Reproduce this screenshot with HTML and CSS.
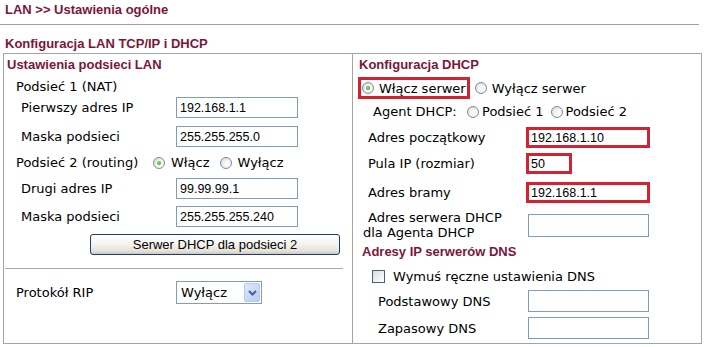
FILE: index.html
```html
<!DOCTYPE html>
<html>
<head>
	<meta charset="utf-8">
	<title>LAN - Ustawienia ogólne</title>
	<link rel="stylesheet" href="styles.css">
</head>
<body>

<div class="title">LAN &gt;&gt; Ustawienia ogólne</div>

<div class="section-title">Konfiguracja LAN TCP/IP i DHCP</div>

<div class="box">
	<div class="col left">
		<div class="h-sub">Ustawienia podsieci LAN</div>
		<div class="sub">Podsieć 1 (NAT)</div>
		<div class="field">
			<span class="lbl">Pierwszy adres IP</span>
			<input class="txt" type="text" value="192.168.1.1">
		</div>
		<div class="field gap8">
			<span class="lbl">Maska podsieci</span>
			<input class="txt" type="text" value="255.255.255.0">
		</div>
		<div class="sub radios">
			<span class="lbl">Podsieć 2 (routing)</span>
			<label class="opt"><span class="radio on"></span>Włącz</label>
			<label class="opt"><span class="radio"></span>Wyłącz</label>
		</div>
		<div class="field">
			<span class="lbl">Drugi adres IP</span>
			<input class="txt" type="text" value="99.99.99.1">
		</div>
		<div class="field gap7">
			<span class="lbl">Maska podsieci</span>
			<input class="txt" type="text" value="255.255.255.240">
		</div>
		<div class="btn-row">
			<button class="btn" type="button">Serwer DHCP dla podsieci 2</button>
		</div>
		<div class="sep"></div>
		<div class="rip">
			<span class="lbl">Protokół RIP</span>
			<div class="select">
				<span class="sel-val">Wyłącz</span>
				<span class="sel-arrow">
					<svg width="9" height="6" viewBox="0 0 9 6"><path d="M1 1 L4.5 4.5 L8 1" fill="none" stroke="#4d6185" stroke-width="2"/></svg>
				</span>
			</div>
		</div>
	</div>

	<div class="col right">
		<div class="h-sub">Konfiguracja DHCP</div>
		<div class="srv">
			<label class="opt mark"><span class="radio on"></span>Włącz serwer</label>
			<label class="opt"><span class="radio"></span>Wyłącz serwer</label>
		</div>
		<div class="agent">
			<span class="lbl">Agent DHCP:</span>
			<label class="opt"><span class="radio"></span>Podsieć 1</label>
			<label class="opt"><span class="radio"></span>Podsieć 2</label>
		</div>
		<div class="rfield first">
			<span class="lbl">Adres początkowy</span>
			<input class="txt red" type="text" value="192.168.1.10">
		</div>
		<div class="rfield g5">
			<span class="lbl">Pula IP (rozmiar)</span>
			<input class="txt red short" type="text" value="50">
		</div>
		<div class="rfield g8">
			<span class="lbl">Adres bramy</span>
			<input class="txt red" type="text" value="192.168.1.1">
		</div>
		<div class="rfield agent-srv">
			<span class="lbl"><span class="l1">Adres serwera DHCP</span><span class="l2">dla Agenta DHCP</span></span>
			<input class="txt tall" type="text" value="">
		</div>
		<div class="h-dns">Adresy IP serwerów DNS</div>
		<div class="chk-row">
			<span class="chk"></span>Wymuś ręczne ustawienia DNS
		</div>
		<div class="dns g1">
			<span class="lbl">Podstawowy DNS</span>
			<input class="txt" type="text" value="">
		</div>
		<div class="dns g5">
			<span class="lbl">Zapasowy DNS</span>
			<input class="txt" type="text" value="">
		</div>
	</div>
</div>

</body>
</html>
```

FILE: styles.css
```css
body{
	margin: 0;
	padding: 0;
	font-family: "DejaVu Sans", Verdana, sans-serif;
	font-size: 13px;
	color: #000;
	background-color: #fff;
}

.title{
	font: bold 13px "Liberation Sans", Arial, sans-serif;
	color: #7d1538;
	height: 24px;
	line-height: 20px;
	padding-left: 5px;
	margin-right: 5px;
	border-bottom: 1px solid #a0a0a0;
}

.section-title{
	font: bold 13px "Liberation Sans", Arial, sans-serif;
	color: #7d1538;
	padding: 10px 0 0 5px;
	height: 18px;
	line-height: 18px;
}

.box{
	margin-left: 3px;
	width: 697px;
	height: 289px;
	border: 1px solid #a4a4a4;
	display: grid;
	grid-template-columns: 348px 349px;
}

.col{
	display: flex;
	flex-direction: column;
}

.right{
	border-left: 1px solid #a4a4a4;
}

.h-sub{
	font: bold 13px "Liberation Sans", Arial, sans-serif;
	color: #7d1538;
	height: 22px;
	line-height: 22px;
	padding-left: 3px;
}

.right .h-sub{
	height: 21px;
	line-height: 21px;
	padding-left: 6px;
}

.sub{
	height: 21px;
	padding-left: 12px;
	display: flex;
	align-items: center;
}

.sub.radios{
	height: 31px;
}

.sub.radios .lbl{
	width: 137px;
}

.field{
	display: flex;
	align-items: center;
	height: 21px;
	padding-left: 17px;
}

.field .lbl{
	width: 155px;
}

.gap8{ margin-top: 8px; }
.gap7{ margin-top: 7px; }

.txt{
	box-sizing: border-box;
	width: 122px;
	height: 21px;
	margin: 0;
	padding: 0 3px;
	border: 1px solid #7f9db9;
	font: 12.5px "Liberation Sans", Arial, sans-serif;
	color: #000;
	background: #fff;
}

.txt.red{
	width: 124px;
	border: 3px solid #d52230;
	padding: 0 2px;
}

.txt.short{
	width: 46px;
}

.txt.tall{
	height: 23px;
	width: 121px;
}

/* XP style radio and checkbox */
.opt{
	display: flex;
	align-items: center;
	gap: 6px;
	margin-right: 10px;
}

.radio{
	box-sizing: border-box;
	width: 12px;
	height: 12px;
	border: 1px solid #7c8aa4;
	border-radius: 50%;
	background: radial-gradient(circle at 65% 65%, #ffffff 0%, #f2f2ee 45%, #d4d4ce 100%);
	display: flex;
	align-items: center;
	justify-content: center;
}

.radio.on::after{
	content: "";
	width: 4px;
	height: 4px;
	border-radius: 50%;
	background: radial-gradient(circle at 40% 40%, #7be36a, #219a21);
}

.chk{
	box-sizing: border-box;
	width: 13px;
	height: 13px;
	border: 1px solid #4e5f7e;
	background: linear-gradient(135deg, #dcdcd6, #ffffff);
	margin-right: 8px;
}

.btn-row{
	margin-top: 7px;
	padding-left: 86px;
}

.btn{
	box-sizing: border-box;
	width: 250px;
	height: 21px;
	margin: 0;
	padding: 0;
	border: 1px solid #1c3e6e;
	border-radius: 3px;
	background: linear-gradient(#ffffff 0%, #f4f3ee 50%, #e4e1d8 85%, #cdc8bb 100%);
	font: 13px "Liberation Sans", Arial, sans-serif;
	color: #000;
}

.sep{
	margin-top: 13px;
	margin-left: 1px;
	margin-right: 9px;
	height: 0;
	border-top: 1px solid #a8a8a8;
}

.rip{
	margin-top: 12px;
	display: flex;
	align-items: center;
	padding-left: 12px;
	height: 23px;
}

.rip .lbl{
	width: 160px;
}

.select{
	box-sizing: border-box;
	width: 86px;
	height: 23px;
	border: 1px solid #7f9db9;
	display: flex;
	align-items: center;
	justify-content: space-between;
	padding: 0 1px 0 4px;
}

.sel-arrow{
	box-sizing: border-box;
	width: 16px;
	height: 19px;
	border: 1px solid #b7c9f5;
	border-radius: 2px;
	background: linear-gradient(135deg, #e0e9fd, #b6cbf8);
	display: flex;
	align-items: center;
	justify-content: center;
}

.srv{
	margin-top: 2px;
	display: flex;
	align-items: center;
	padding-left: 5px;
	height: 22px;
}

.srv .opt.mark{
	box-sizing: border-box;
	height: 22px;
	border: 3px solid #d52230;
	padding: 0 1px 0 1px;
	gap: 5px;
	margin-right: 5px;
}

.srv .opt{
	gap: 5px;
}

.agent{
	height: 25px;
	display: flex;
	align-items: center;
	padding-left: 20px;
}

.agent .lbl{
	width: 94px;
}

.agent .opt{
	gap: 3px;
	margin-right: 7px;
}

.rfield{
	display: flex;
	align-items: center;
	height: 21px;
	padding-left: 15px;
}

.rfield .lbl{
	width: 158px;
}

.first{ margin-top: 3px; }
.g5{ margin-top: 5px; }
.g8{ margin-top: 8px; }
.g1{ margin-top: 1px; }

.agent-srv{
	margin-top: 7px;
	height: 30px;
}

.agent-srv .lbl{
	width: 160px;
	line-height: 15px;
	display: flex;
	flex-direction: column;
}

.agent-srv .l2{
	margin-left: -5px;
}

.h-dns{
	font: bold 13px "Liberation Sans", Arial, sans-serif;
	color: #7d1538;
	height: 24px;
	line-height: 24px;
	padding-left: 9px;
}

.chk-row{
	height: 25px;
	display: flex;
	align-items: center;
	padding-left: 19px;
}

.dns{
	display: flex;
	align-items: center;
	height: 22px;
	padding-left: 25px;
}

.dns .lbl{
	width: 150px;
}

.dns .txt{
	width: 121px;
	height: 22px;
}
```
